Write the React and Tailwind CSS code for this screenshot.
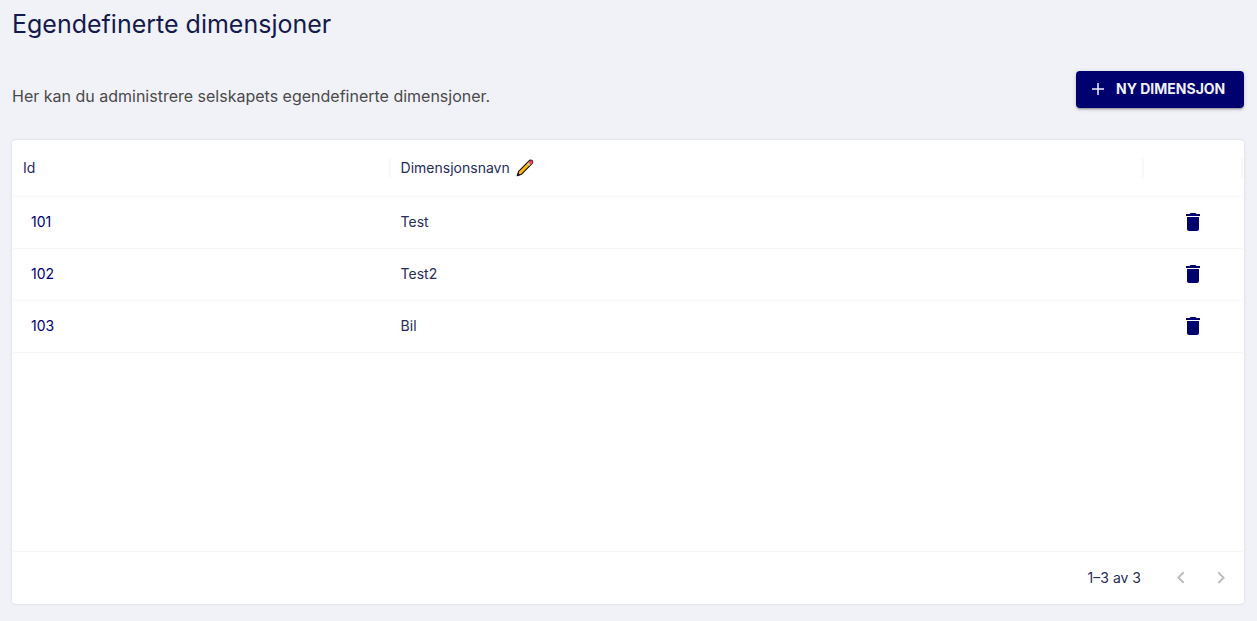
import React from "react";

const dimensions = [
  { id: 101, name: "Test" },
  { id: 102, name: "Test2" },
  { id: 103, name: "Bil" },
];

function PlusIcon() {
  return (
    <svg viewBox="0 0 20 20" className="size-5" fill="none" stroke="currentColor" strokeWidth="1.5" aria-hidden="true">
      <path d="M10 4v12M4 10h12" />
    </svg>
  );
}

function PencilIcon() {
  return (
    <svg viewBox="0 0 18 18" className="size-[18px]" aria-hidden="true">
      <path
        d="M1.3 16.7l1.3-4.4L13.1 1.8c.9-.9 2.2-1 3-.2s.8 2.1-.1 3L5.6 15.2z"
        fill="#ffb70a"
        stroke="#141414"
        strokeWidth="1.2"
        strokeLinejoin="round"
      />
      <path d="M11.3 4.400l2.300 2.300 1-1-2.300-2.300z" fill="#c8ccd8" />
      <path d="M12.300 3.300l2.500 2.500 1.300-1.200c.7-.8.7-2.100.1-2.700s-1.900-.6-2.700.1z" fill="#f0445a" />
      <path d="M1 17l1-3.200 2.200 2.200z" fill="#141414" />
    </svg>
  );
}

function TrashIcon() {
  return (
    <svg viewBox="0 0 24 24" className="size-6" fill="currentColor" aria-hidden="true">
      <path d="M6 19c0 1.100.9 2 2 2h8c1.100 0 2-.9 2-2V7H6v12zM19 4h-3.500l-1-1h-5l-1 1H5v2h14V4z" />
    </svg>
  );
}

function Chevron({ d }) {
  return (
    <svg viewBox="0 0 24 24" className="size-6" fill="currentColor" aria-hidden="true">
      <path d={d} />
    </svg>
  );
}

export default function App() {
  return (
    <div className="min-h-screen bg-[#f1f2f8] px-3 pt-1 pb-4 font-['Inter',sans-serif] text-[#262c58]">
      <h1 className="text-[25px] leading-10 text-[#141a4b]">Egendefinerte dimensjoner</h1>

      <div className="mt-6 flex items-start justify-between pr-px">
        <p className="pt-4 text-base leading-6 text-[#4a4a4a]">
          Her kan du administrere selskapets egendefinerte dimensjoner.
        </p>
        <button
          type="button"
          className="mt-[3px] flex h-[37px] min-w-[168px] items-center gap-2 rounded bg-[#00006e] pr-4 pb-px pl-3 text-sm font-bold text-[#f1f2f8] shadow-[0_3px_1px_-2px_rgba(0,0,0,0.2),0_2px_2px_0_rgba(0,0,0,0.14),0_1px_5px_0_rgba(0,0,0,0.12)]"
        >
          <PlusIcon />
          NY DIMENSJON
        </button>
      </div>

      <section className="mt-8 mr-px rounded bg-white px-px shadow-[0_0_3px_rgba(0,0,0,0.12)]">
        <div className="min-h-[411px]">
          <table className="w-full table-fixed border-collapse text-sm">
            <thead>
              <tr className="h-14 border-b border-[#f6f6f8] text-left">
                <th scope="col" className="w-[30.7%] p-0 font-normal">
                  <div className="flex h-5 items-center border-r-2 border-[#f8f8fa] px-[10px]">Id</div>
                </th>
                <th scope="col" className="p-0 font-normal">
                  <div className="flex h-5 items-center gap-[6px] border-r-2 border-[#f8f8fa] px-[10px]">
                    Dimensjonsnavn
                    <PencilIcon />
                  </div>
                </th>
                <th scope="col" className="w-[99px] p-0" aria-label="Handlinger">
                  <div className="h-5 border-r-2 border-[#f8f8fa]" />
                </th>
              </tr>
            </thead>
            <tbody>
              {dimensions.map((row) => (
                <tr key={row.id} className="h-[52px] border-b border-[#f6f6f8]">
                  <td className="px-[18px] py-0 text-[#00006e]">{row.id}</td>
                  <td className="px-[10px] py-0">{row.name}</td>
                  <td className="p-0 pr-[2px]">
                    <button
                      type="button"
                      aria-label={`Slett ${row.name}`}
                      className="mx-auto flex size-10 items-center justify-center text-[#00006e]"
                    >
                      <TrashIcon />
                    </button>
                  </td>
                </tr>
              ))}
            </tbody>
          </table>
        </div>

        <footer className="flex h-[53px] items-center justify-end border-t border-[#f6f6f8] pr-[2px] text-sm">
          <span className="mr-5">1–3 av 3</span>
          <button type="button" disabled aria-label="Forrige side" className="flex size-10 items-center justify-center text-[#bdbdbd]">
            <Chevron d="M15.410 16.090l-4.580-4.590 4.580-4.590L14 5.500l-6 6 6 6z" />
          </button>
          <button type="button" disabled aria-label="Neste side" className="flex size-10 items-center justify-center text-[#bdbdbd]">
            <Chevron d="M8.590 16.340l4.580-4.590-4.580-4.590L10 5.750l6 6-6 6z" />
          </button>
        </footer>
      </section>
    </div>
  );
}
